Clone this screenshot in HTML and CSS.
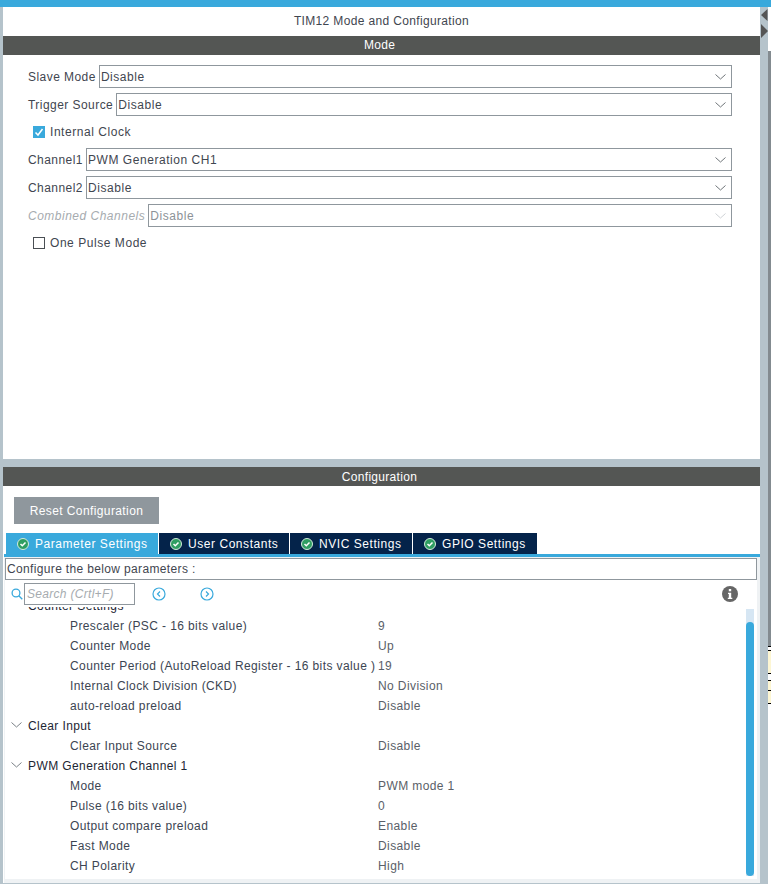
FILE: index.html
```html
<!DOCTYPE html>
<html lang="en">
<head>
<meta charset="utf-8">
<title>TIM12 Mode and Configuration</title>
<link rel="stylesheet" href="styles.css">
</head>
<body>
<div class="topbar"></div>
<div class="workspace">
  <main class="main">
    <section class="mode-panel">
      <h1 class="title">TIM12 Mode and Configuration</h1>
      <h2 class="section-head">Mode</h2>
      <div class="form">
        <div class="field"><label class="lbl">Slave Mode</label><div class="select"><span>Disable</span><svg class="chev" viewBox="0 0 11 6"><path d="M.5.5 5.5 5l5-4.500"/></svg></div></div>
        <div class="field"><label class="lbl">Trigger Source</label><div class="select"><span>Disable</span><svg class="chev" viewBox="0 0 11 6"><path d="M.5.5 5.5 5l5-4.500"/></svg></div></div>
        <div class="check-row check-a"><svg class="check on" viewBox="0 0 12 12"><path d="M2.500 6.500 5 9l4.500-6"/></svg><span>Internal Clock</span></div>
        <div class="field"><label class="lbl">Channel1</label><div class="select"><span>PWM Generation CH1</span><svg class="chev" viewBox="0 0 11 6"><path d="M.5.5 5.500 5l5-4.500"/></svg></div></div>
        <div class="field"><label class="lbl">Channel2</label><div class="select"><span>Disable</span><svg class="chev" viewBox="0 0 11 6"><path d="M.5.5 5.500 5l5-4.500"/></svg></div></div>
        <div class="field disabled"><label class="lbl">Combined Channels</label><div class="select"><span>Disable</span><svg class="chev" viewBox="0 0 11 6"><path d="M.5.5 5.500 5l5-4.500"/></svg></div></div>
        <div class="check-row check-b"><span class="check off"></span><span>One Pulse Mode</span></div>
      </div>
    </section>
    <section class="config-panel">
      <h2 class="section-head config-head">Configuration</h2>
      <button class="reset">Reset Configuration</button>
      <div class="tabs">
        <div class="tab active t1"><svg class="ok" viewBox="0 0 12 12"><circle cx="6" cy="6" r="5.500"/><path d="M3.500 6 5.300 7.800 8.500 4.500"/></svg>Parameter Settings</div>
        <div class="tab t2"><svg class="ok" viewBox="0 0 12 12"><circle cx="6" cy="6" r="5.500"/><path d="M3.500 6 5.300 7.800 8.500 4.500"/></svg>User Constants</div>
        <div class="tab t3"><svg class="ok" viewBox="0 0 12 12"><circle cx="6" cy="6" r="5.500"/><path d="M3.500 6 5.300 7.800 8.500 4.500"/></svg>NVIC Settings</div>
        <div class="tab t4"><svg class="ok" viewBox="0 0 12 12"><circle cx="6" cy="6" r="5.500"/><path d="M3.500 6 5.300 7.800 8.500 4.500"/></svg>GPIO Settings</div>
      </div>
      <div class="tab-body">
        <div class="hint">Configure the below parameters :</div>
        <div class="searchbar">
          <svg class="mag" viewBox="0 0 12 12"><circle cx="5" cy="5" r="3.900"/><path d="M7.800 7.800 11.300 11.300"/></svg>
          <div class="search">Search (Crtl+F)</div>
          <svg class="nav nav-prev" viewBox="0 0 14 14"><circle cx="7" cy="7" r="6"/><path d="M8 4.500 5.500 7 8 9.500"/></svg>
          <svg class="nav nav-next" viewBox="0 0 14 14"><circle cx="7" cy="7" r="6"/><path d="M6 4.500 8.500 7 6 9.500"/></svg>
          <svg class="info" viewBox="0 0 16 16"><circle cx="8" cy="8" r="8"/><rect x="6.800" y="3" width="2.400" height="2.300"/><path d="M6 6.700h3.200v5.100H10.300v1.300H5.800v-1.300h1V8H6z"/></svg>
        </div>
        <div class="tree-wrap">
          <div class="tree">
            <div class="tree-row group clipped"><span class="name">Counter Settings</span></div>
            <div class="tree-row"><span class="name">Prescaler (PSC - 16 bits value)</span><span class="val">9</span></div>
            <div class="tree-row"><span class="name">Counter Mode</span><span class="val">Up</span></div>
            <div class="tree-row"><span class="name">Counter Period (AutoReload Register - 16 bits value )</span><span class="val">19</span></div>
            <div class="tree-row"><span class="name">Internal Clock Division (CKD)</span><span class="val">No Division</span></div>
            <div class="tree-row"><span class="name">auto-reload preload</span><span class="val">Disable</span></div>
            <div class="tree-row group"><svg class="tree-chev" viewBox="0 0 11 6"><path d="M.5.5 5.500 5l5-4.500"/></svg><span class="name">Clear Input</span></div>
            <div class="tree-row"><span class="name">Clear Input Source</span><span class="val">Disable</span></div>
            <div class="tree-row group"><svg class="tree-chev" viewBox="0 0 11 6"><path d="M.5.5 5.500 5l5-4.500"/></svg><span class="name">PWM Generation Channel 1</span></div>
            <div class="tree-row"><span class="name">Mode</span><span class="val">PWM mode 1</span></div>
            <div class="tree-row"><span class="name">Pulse (16 bits value)</span><span class="val">0</span></div>
            <div class="tree-row"><span class="name">Output compare preload</span><span class="val">Enable</span></div>
            <div class="tree-row"><span class="name">Fast Mode</span><span class="val">Disable</span></div>
            <div class="tree-row"><span class="name">CH Polarity</span><span class="val">High</span></div>
          </div>
          <div class="scrollbar"><div class="thumb"></div></div>
        </div>
      </div>
    </section>
  </main>
  <div class="gutter">
    <svg class="splitter" viewBox="0 0 8 30"><path d="M7.500 0 1 6l6.500 6zM1 15l7 7-7 7z"/></svg>
  </div>
  <aside class="edge">
    <div class="edge-white"></div>
    <div class="edge-grey"></div>
    <div class="edge-table">
      <div class="et et1"></div><div class="et et2"></div><div class="et et3"></div><div class="et et4"></div><div class="et et5"></div>
    </div>
  </aside>
</div>
</body>
</html>
```
FILE: styles.css
```css
* { box-sizing: border-box; }
html, body { margin: 0; height: 100%; }
body {
  width: 771px;
  height: 890px;
  overflow: hidden;
  background: #fff;
  font-family: "Liberation Sans", Arial, sans-serif;
  font-size: 12px;
  letter-spacing: 0.4px;
  color: #3f4650;
}
.topbar { height: 7px; background: #39a9dc; }
.workspace { display: flex; height: 877px; align-items: flex-start; }
.main {
  width: 760px;
  height: 877px;
  display: flex;
  flex-direction: column;
  border-left: 3px solid #b5c3cb;
  border-bottom: 1px solid #b5c3cb;
}
.mode-panel { height: 452px; background: #fff; }
.title {
  margin: 0;
  height: 29px;
  line-height: 29px;
  font-size: 12px;
  font-weight: 400;
  letter-spacing: 0.35px;
  text-align: center;
  color: #3f4650;
}
.section-head {
  margin: 0;
  height: 19px;
  line-height: 19px;
  padding-right: 4px;
  font-size: 12px;
  font-weight: 400;
  letter-spacing: 0.3px;
  text-align: center;
  color: #fff;
  background: #545654;
}
.config-head { line-height: 20px; }
.form { padding: 10px 28px 0 25px; letter-spacing: 0.55px; }
.field { display: flex; align-items: center; height: 23px; margin-bottom: 5px; }
.lbl { margin-right: 3px; white-space: nowrap; letter-spacing: 0.45px; }
.select {
  flex: 1;
  height: 23px;
  display: flex;
  align-items: center;
  justify-content: space-between;
  padding: 0 5px 0 1px;
  border: 1px solid #8f979d;
  background: #fff;
}
.chev { width: 11px; height: 6px; fill: none; stroke: #6f7579; stroke-width: 1; }
.disabled .lbl { font-style: italic; color: #a6abaf; letter-spacing: 0.5px; }
.disabled .select { color: #8c9297; }
.disabled .chev { stroke: #cfd3d6; }
.check-row { display: flex; align-items: center; height: 12px; padding-left: 5px; gap: 5px; }
.check-a { margin-top: 10px; margin-bottom: 10px; }
.check-b { margin-top: 10px; }
.check { width: 12px; height: 12px; flex: none; }
.check.on { background: #39a9dc; fill: none; stroke: #fff; stroke-width: 1.500; }
.check.off { border: 1px solid #4a4f54; background: #fff; }

.config-panel { flex: 1; border-top: 8px solid #b5c3cb; display: flex; flex-direction: column; min-height: 0; }
.reset {
  display: block;
  width: 145px;
  height: 27px;
  margin: 11px 0 9px 11px;
  padding: 0;
  border: 0;
  background: #8f979d;
  color: #fff;
  font: inherit;
  letter-spacing: 0.4px;
}
.tabs { display: flex; height: 21px; padding-left: 3px; gap: 1px; color: #fff; letter-spacing: 0.55px; }
.tab {
  display: flex;
  align-items: center;
  gap: 6px;
  background: #04234a;
  padding-left: 11px;
  white-space: nowrap;
}
.tab.active { background: #39a9dc; }
.t1 { width: 152px; }
.t2 { width: 130px; }
.t3 { width: 122px; }
.t4 { width: 124px; }
.ok { width: 12px; height: 12px; flex: none; }
.ok circle { fill: #2f9e62; stroke: #d3eadb; stroke-width: 1; }
.ok path { fill: none; stroke: #fff; stroke-width: 1.500; }
.tab-body {
  flex: 1;
  min-height: 0;
  display: flex;
  flex-direction: column;
  margin-left: 1px;
  padding: 0 3px 4px 1px;
  border-top: 3px solid #39a9dc;
  background: #eff2f4;
}
.hint {
  height: 22px;
  line-height: 20px;
  margin: 1px 0 0;
  padding-left: 1px;
  border: 1px solid #8f979d;
  background: #fff;
  letter-spacing: 0.35px;
}
.searchbar {
  flex: none;
  height: 27px;
  display: flex;
  align-items: center;
  background: #fff;
  padding-left: 6px;
}
.mag { width: 12px; height: 12px; fill: none; stroke: #39a9dc; stroke-width: 1.300; flex: none; }
.search {
  width: 111px;
  height: 22px;
  margin-left: 1px;
  padding-left: 2px;
  line-height: 20px;
  border: 1px solid #8f979d;
  font-style: italic;
  letter-spacing: 0.3px;
  color: #a6abaf;
}
.nav { width: 14px; height: 14px; fill: none; stroke: #39a9dc; stroke-width: 1.200; flex: none; }
.nav-prev { margin-left: 17px; }
.nav-next { margin-left: 34px; }
.info { width: 16px; height: 16px; fill: #fff; margin-left: auto; margin-right: 19px; flex: none; }
.info circle { fill: #666; }
.tree-wrap { flex: 1; min-height: 0; display: flex; background: #fff; overflow: hidden; }
.tree { flex: 1; margin-top: -11px; min-width: 0; }
.tree-row { display: flex; align-items: center; height: 20px; padding-left: 65px; white-space: nowrap; color: #3c4552; position: relative; }
.tree-row .name { width: 308px; flex: none; }
.tree-row .val { color: #5a6068; }
.tree-row.group { padding-left: 23px; color: #1d2633; }
.tree-chev { width: 11px; height: 6px; fill: none; stroke: #7a8086; position: absolute; left: 6px; top: 6px; }
.scrollbar { width: 8px; margin: 2px 3px 3px 0; background: #d6e6f3; padding-top: 13px; flex: none; }
.thumb { height: 100%; background: #39a9dc; border-radius: 4px; }

.gutter { width: 8px; height: 877px; background: #b5c3cb; flex: none; }
.splitter { display: block; width: 8px; height: 30px; margin-top: 2px; fill: #555; }
.edge { width: 3px; flex: none; display: flex; flex-direction: column; }
.edge-white { height: 44px; background: #fff; }
.edge-grey { height: 595px; background: #838b90; }
.edge-table { display: flex; flex-direction: column; }
.et { border-top: 1px solid #000; background: #fdf6d3; }
.et1 { height: 4px; background: #fff; }
.et2 { height: 23px; }
.et3 { height: 7px; background: #fff; }
.et4 { height: 10px; }
.et5 { height: 14px; border-bottom: 1px solid #000; }
```
